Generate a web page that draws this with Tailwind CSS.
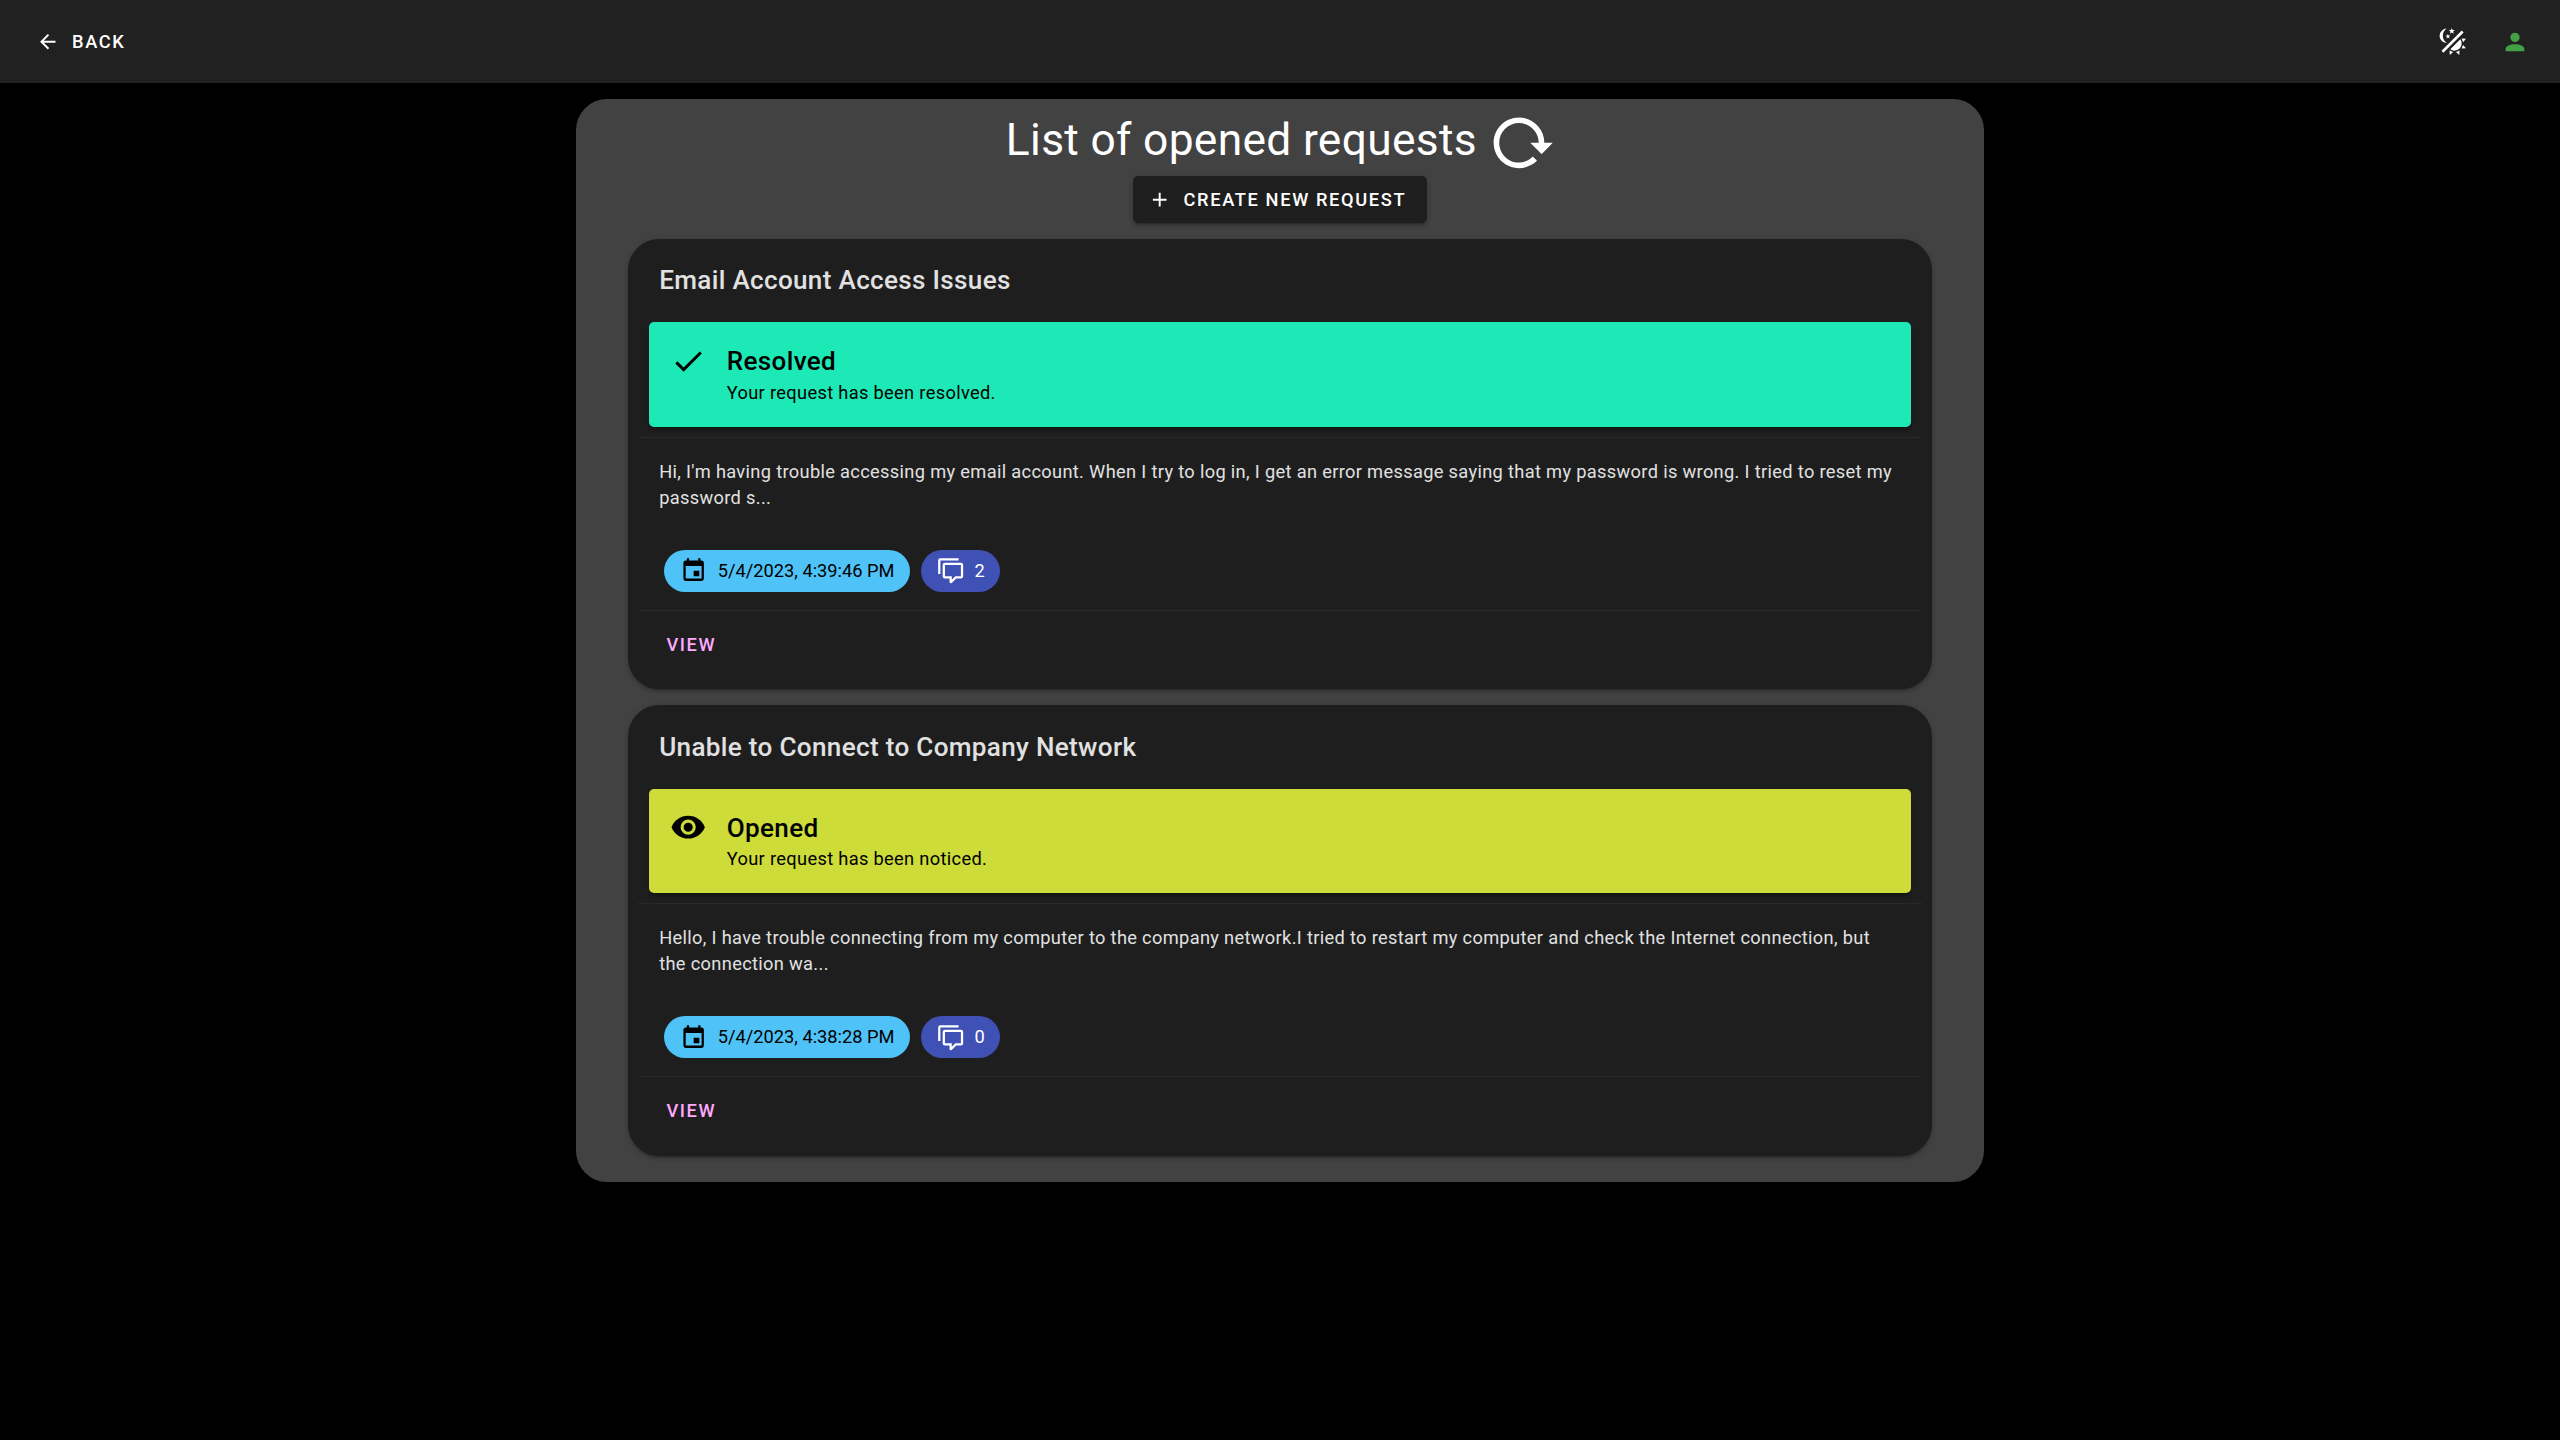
<!DOCTYPE html>
<html lang="en">
<head>
<meta charset="utf-8">
<title>List of opened requests</title>
<script src="https://cdn.jsdelivr.net/npm/@tailwindcss/browser@4"></script>
</head>
<body class="bg-black text-white min-h-screen font-['Roboto',sans-serif] text-[18.26px] leading-[26px]">
<svg class="hidden">
  <symbol id="calendar" viewBox="0 0 24 24"><path d="M19,19H5V8H19M16,1V3H8V1H6V3H5C3.89,3 3,3.89 3,5V19A2,2 0 0,0 5,21H19A2,2 0 0,0 21,19V5C21,3.89 20.1,3 19,3H18V1M17,12H12V17H17V12Z"/></symbol>
  <symbol id="comments" viewBox="0 0 24 24"><path d="M12,23A1,1 0 0,1 11,22V19H7A2,2 0 0,1 5,17V7A2,2 0 0,1 7,5H21A2,2 0 0,1 23,7V17A2,2 0 0,1 21,19H16.9L13.2,22.71C13,22.89 12.76,23 12.5,23H12M13,17V20.08L16.08,17H21V7H7V17H13M3,15H1V3A2,2 0 0,1 3,1H19V3H3V15Z"/></symbol>
</svg>

<header class="h-[83px] bg-[#212121] flex items-center justify-between pl-[36px] pr-[31px]">
  <button class="flex items-center font-medium tracking-[0.0892857em]">
    <svg class="size-[23.4px] mr-[12.6px] fill-current" viewBox="0 0 24 24"><path d="M20,11V13H8L13.5,18.5L12.08,19.92L4.16,12L12.08,4.08L13.5,5.5L8,11H20Z"/></svg>
    <span>BACK</span>
  </button>
  <div class="flex items-center gap-[32.5px]">
    <svg class="size-[31.2px] fill-white" viewBox="0 0 24 24"><path d="M7.5,2C5.71,3.15 4.5,5.18 4.5,7.5C4.5,9.82 5.71,11.85 7.53,13C4.46,13 2,10.54 2,7.5A5.5,5.5 0 0,1 7.5,2M19.07,3.5L20.5,4.93L4.93,20.5L3.5,19.07L19.07,3.5M12.89,5.93L11.41,5L9.97,6L10.39,4.3L9,3.24L10.75,3.12L11.33,1.47L12,3.1L13.73,3.13L12.38,4.26L12.89,5.93M9.59,9.54L8.43,8.81L7.31,9.59L7.65,8.27L6.56,7.44L7.92,7.35L8.37,6.06L8.88,7.33L10.24,7.36L9.19,8.23L9.59,9.54M19,13.5A5.5,5.5 0 0,1 13.5,19C12.28,19 11.15,18.6 10.24,17.93L17.93,10.24C18.6,11.15 19,12.28 19,13.5M14.6,20.08L17.37,18.93L17.13,22.28L14.6,20.08M18.93,17.38L20.08,14.61L22.28,17.15L18.93,17.38M20.08,12.42L18.94,9.64L22.28,9.88L20.08,12.42M9.63,18.93L12.4,20.08L9.87,22.27L9.63,18.93Z"/></svg>
    <svg class="size-[28px] fill-[#43a047]" viewBox="0 0 24 24"><path d="M12,4A4,4 0 0,1 16,8A4,4 0 0,1 12,12A4,4 0 0,1 8,8A4,4 0 0,1 12,4M12,14C16.42,14 20,15.79 20,18V20H4V18C4,15.79 7.58,14 12,14Z"/></svg>
  </div>
</header>

<main class="mt-4 mx-auto w-[1408px] h-[1083px] bg-[#424242] rounded-[31.2px] px-[52px] flex flex-col">
  <div class="h-[77px] pt-[9px] pl-[1.4px] flex justify-center items-start">
    <h1 class="text-[44.3px] leading-[64px] tracking-[0.0073529em] mr-[11px]">List of opened requests</h1>
    <svg class="size-[67.6px] mt-px fill-white" viewBox="0 0 24 24"><path d="M2 12C2 16.97 6.03 21 11 21C13.39 21 15.68 20.06 17.4 18.4L15.9 16.9C14.63 18.25 12.86 19 11 19C4.76 19 1.64 11.46 6.05 7.05C10.46 2.64 18 5.77 18 12H15L19 16H19.1L23 12H20C20 7.03 15.97 3 11 3C6.03 3 2 7.03 2 12Z"/></svg>
  </div>
  <button class="self-center h-[47px] pl-[15px] pr-[20.8px] bg-[#1e1e1e] rounded-[5px] flex items-center font-medium tracking-[0.0892857em] shadow-[0_4px_1px_-3px_rgba(0,0,0,0.2),0_3px_3px_0_rgba(0,0,0,0.14),0_1px_6px_0_rgba(0,0,0,0.12)]">
    <svg class="size-[23.4px] mr-[12.2px] fill-current" viewBox="0 0 24 24"><path d="M19,13H13V19H11V13H5V11H11V5H13V11H19V13Z"/></svg>
    <span>CREATE NEW REQUEST</span>
  </button>

  <section class="mt-4 flex flex-col gap-[16px]">
    <article class="h-[450.4px] bg-[#1e1e1e] rounded-[31.2px] px-[10.4px] shadow-[0_4px_1px_-3px_rgba(0,0,0,0.2),0_3px_3px_0_rgba(0,0,0,0.14),0_1px_6px_0_rgba(0,0,0,0.12)]">
      <h2 class="px-[20.8px] pt-[20.8px] h-[83.2px] text-[26.08px] leading-[41.6px] font-medium tracking-[0.0125em] text-[#e1e1e1]">Email Account Access Issues</h2>
      <div class="mx-[10.4px] p-[20.8px] flex gap-[20.8px] bg-[#1de9b6] text-black rounded-[5px] shadow-[0_3px_3px_rgba(0,0,0,0.3)]">
        <svg class="size-[36.4px] fill-current" viewBox="0 0 24 24"><path d="M21,7L9,19L3.5,13.5L4.91,12.09L9,16.17L19.59,5.59L21,7Z"/></svg>
        <div>
          <h3 class="text-[26.08px] leading-[37px] font-medium tracking-[0.0125em]">Resolved</h3>
          <p class="tracking-[0.0178571em]">Your request has been resolved.</p>
        </div>
      </div>
      <hr class="mt-[10.4px] border-t border-[#292929]">
      <p class="px-[20.8px] pt-[20.8px] tracking-[0.0178571em] text-[#e1e1e1]">Hi, I'm having trouble accessing my email account. When I try to log in, I get an error message saying that my password is wrong. I tried to reset my password s...</p>
      <div class="mt-[39px] px-[26px] flex gap-[11px]">
        <span class="h-[41.6px] px-[15.6px] rounded-full bg-[#4fc3f7] text-black flex items-center gap-[10.4px]"><svg class="size-[27.3px] fill-current"><use href="#calendar"/></svg><span>5/4/2023, 4:39:46 PM</span></span>
        <span class="h-[41.6px] px-[15.6px] rounded-full bg-[#3f51b5] flex items-center gap-[10.4px]"><svg class="size-[27.3px] fill-current"><use href="#comments"/></svg><span>2</span></span>
      </div>
      <hr class="mt-[18.2px] border-t border-[#292929]">
      <button class="ml-[28px] mt-[21px] block font-medium tracking-[0.0892857em] text-[#ffaaff]">VIEW</button>
    </article>

    <article class="h-[450.4px] bg-[#1e1e1e] rounded-[31.2px] px-[10.4px] shadow-[0_4px_1px_-3px_rgba(0,0,0,0.2),0_3px_3px_0_rgba(0,0,0,0.14),0_1px_6px_0_rgba(0,0,0,0.12)]">
      <h2 class="px-[20.8px] pt-[21.4px] h-[83.2px] text-[26.08px] leading-[41.6px] font-medium tracking-[0.0125em] text-[#e1e1e1]">Unable to Connect to Company Network</h2>
      <div class="mx-[10.4px] p-[20.8px] flex gap-[20.8px] bg-[#cddc39] text-black rounded-[5px] shadow-[0_3px_3px_rgba(0,0,0,0.3)]">
        <svg class="size-[36.4px] fill-current" viewBox="0 0 24 24"><path d="M12,9A3,3 0 0,0 9,12A3,3 0 0,0 12,15A3,3 0 0,0 15,12A3,3 0 0,0 12,9M12,17A5,5 0 0,1 7,12A5,5 0 0,1 12,7A5,5 0 0,1 17,12A5,5 0 0,1 12,17M12,4.5C7,4.5 2.73,7.61 1,12C2.73,16.39 7,19.5 12,19.5C17,19.5 21.27,16.39 23,12C21.27,7.61 17,4.5 12,4.5Z"/></svg>
        <div>
          <h3 class="mt-[0.6px] -mb-[0.6px] text-[26.08px] leading-[37px] font-medium tracking-[0.0125em]">Opened</h3>
          <p class="tracking-[0.0178571em]">Your request has been noticed.</p>
        </div>
      </div>
      <hr class="mt-[9.9px] mb-[0.5px] border-t border-[#292929]">
      <p class="px-[20.8px] pt-[20.8px] tracking-[0.0178571em] text-[#e1e1e1]">Hello, I have trouble connecting from my computer to the company network.I tried to restart my computer and check the Internet connection, but<br>the connection wa...</p>
      <div class="mt-[39px] px-[26px] flex gap-[11px]">
        <span class="h-[41.6px] px-[15.6px] rounded-full bg-[#4fc3f7] text-black flex items-center gap-[10.4px]"><svg class="size-[27.3px] fill-current"><use href="#calendar"/></svg><span>5/4/2023, 4:38:28 PM</span></span>
        <span class="h-[41.6px] px-[15.6px] rounded-full bg-[#3f51b5] flex items-center gap-[10.4px]"><svg class="size-[27.3px] fill-current"><use href="#comments"/></svg><span>0</span></span>
      </div>
      <hr class="mt-[18.2px] border-t border-[#292929]">
      <button class="ml-[28px] mt-[21px] block font-medium tracking-[0.0892857em] text-[#ffaaff]">VIEW</button>
    </article>
  </section>
</main>
</body>
</html>
